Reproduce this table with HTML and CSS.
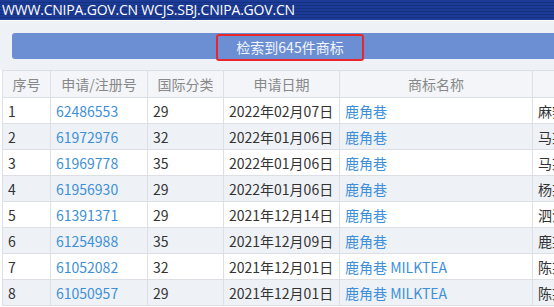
FILE: index.html
```html
<!DOCTYPE html>
<html lang="zh">
<head>
<meta charset="utf-8">
<link rel="stylesheet" href="styles.css">
</head>
<body>
<div class="topbar">WWW.CNIPA.GOV.CN WCJS.SBJ.CNIPA.GOV.CN</div>
<div class="toolbar">
  <div class="resultbar"><span class="count">检索到645件商标</span></div>
</div>
<table class="grid">
  <colgroup>
    <col class="c1"><col class="c2"><col class="c3"><col class="c4"><col class="c5"><col class="c6">
  </colgroup>
  <thead>
    <tr><th>序号</th><th>申请/注册号</th><th>国际分类</th><th>申请日期</th><th>商标名称</th><th>申请人名称</th></tr>
  </thead>
  <tbody>
    <tr><td>1</td><td class="link">62486553</td><td>29</td><td>2022年02月07日</td><td class="link">鹿角巷</td><td>麻辣有限公司</td></tr>
    <tr><td>2</td><td class="link">61972976</td><td>32</td><td>2022年01月06日</td><td class="link">鹿角巷</td><td>马某某</td></tr>
    <tr><td>3</td><td class="link">61969778</td><td>35</td><td>2022年01月06日</td><td class="link">鹿角巷</td><td>马某某</td></tr>
    <tr><td>4</td><td class="link">61956930</td><td>29</td><td>2022年01月06日</td><td class="link">鹿角巷</td><td>杨某某</td></tr>
    <tr><td>5</td><td class="link">61391371</td><td>29</td><td>2021年12月14日</td><td class="link">鹿角巷</td><td>泗洪某某</td></tr>
    <tr><td>6</td><td class="link">61254988</td><td>35</td><td>2021年12月09日</td><td class="link">鹿角巷</td><td>鹿某某</td></tr>
    <tr><td>7</td><td class="link">61052082</td><td>32</td><td>2021年12月01日</td><td class="link">鹿角巷 MILKTEA</td><td>陈某某</td></tr>
    <tr><td>8</td><td class="link">61050957</td><td>29</td><td>2021年12月01日</td><td class="link">鹿角巷 MILKTEA</td><td>陈某某</td></tr>
  </tbody>
</table>
</body>
</html>
```

FILE: styles.css
```css
html, body {
  margin: 0;
  padding: 0;
}
body {
  width: 554px;
  height: 307px;
  overflow: hidden;
  background: #ffffff;
  font-family: "Noto Sans CJK SC", "Noto Sans", sans-serif;
  font-size: 14px;
  color: #333333;
}
.topbar {
  height: 20px;
  line-height: 20px;
  padding-left: 2px;
  color: #ffffff;
  font-family: "Open Sans", "Noto Sans CJK SC", sans-serif;
  font-size: 14px;
  letter-spacing: -0.2px;
  white-space: nowrap;
  background: repeating-linear-gradient(to bottom, #1c3b97 0px, #1c3b97 2px, #15307f 2px, #15307f 3px);
  border-bottom: 1px solid #ffffff;
}
.toolbar {
  background: #eef2f7;
  padding: 12px 0 11px 12px;
  height: 26px;
}
.resultbar {
  height: 26px;
  background: #6b8fd2;
  border-radius: 3px 0 0 3px;
  display: flex;
  align-items: center;
  justify-content: center;
  padding-left: 14px;
}
.count {
  color: #f2f5fb;
  font-size: 14px;
  line-height: 21px;
  padding: 1px 18px 1px 18px;
  border: 2px solid #e8262b;
  border-radius: 3px;
  margin-top: 3px;
}
.grid {
  border-collapse: collapse;
  table-layout: fixed;
  width: 660px;
  margin-left: 2px;
}
.c1 { width: 48px; }
.c2 { width: 97px; }
.c3 { width: 76px; }
.c4 { width: 116px; }
.c5 { width: 193px; }
.c6 { width: 130px; }
.grid th, .grid td {
  border: 1px solid #dcdfe3;
  padding: 0 5px;
  white-space: nowrap;
  overflow: hidden;
  text-align: left;
  font-weight: normal;
}
.grid th {
  height: 26px;
  background: #f3f5f8;
  color: #888888;
  text-align: center;
}
.grid td {
  height: 25px;
}
.grid tbody tr:nth-child(odd) td { background: #ffffff; }
.grid tbody tr:nth-child(even) td { background: #eef2f7; }
.grid td.link { color: #3d8fd9; }
```
